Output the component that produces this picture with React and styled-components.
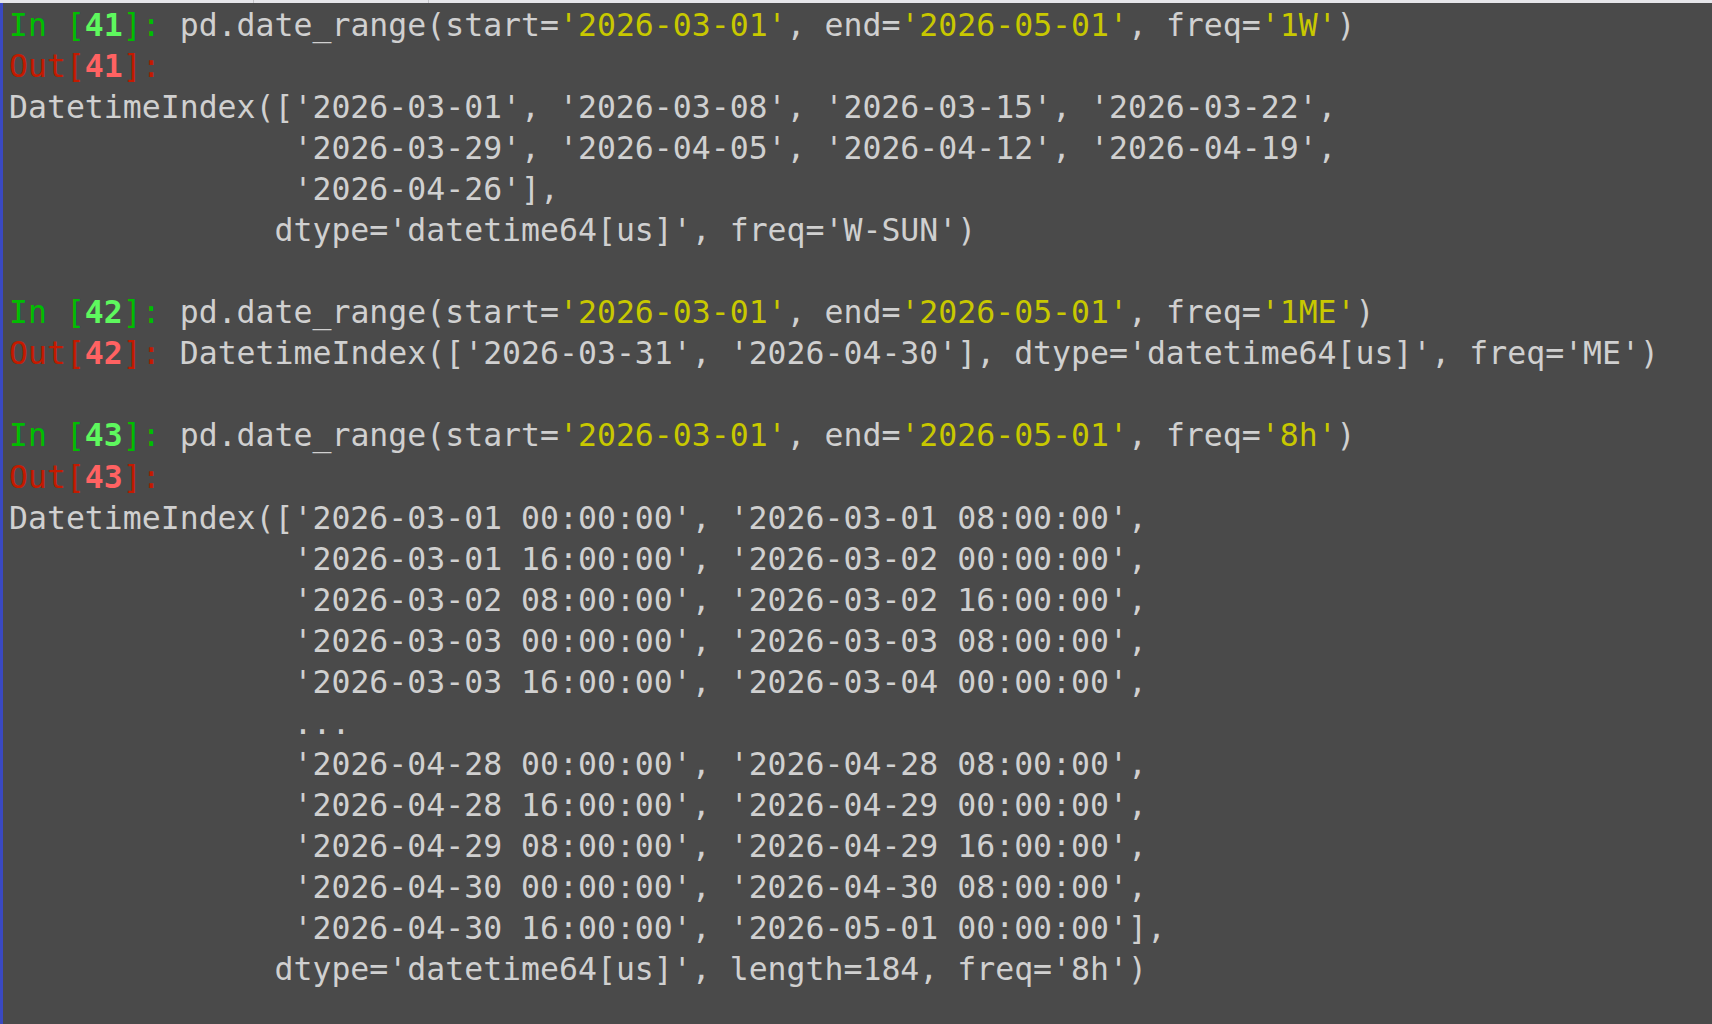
import React from "react";
import styled, { createGlobalStyle } from "styled-components";

const Global = createGlobalStyle`
  html, body { margin: 0; padding: 0; background: #4a4a4a; }
  #root { min-height: 100vh; }
`;

const Window = styled.div`
  width: 1712px;
  height: 1024px;
  display: flex;
  flex-direction: column;
  background: #4a4a4a;
  overflow: hidden;
`;

const TabStrip = styled.div`
  height: 3px;
  flex: none;
  display: flex;
  background: #e6e6ea;
`;

const TabEdge = styled.div`
  width: ${(p) => p.$w}px;
  flex: none;
  border-right: 1px solid #c4c4c8;
`;

const Body = styled.div`
  flex: 1;
  display: flex;
  border-left: 3px solid #3a49c2;
`;

const Console = styled.pre`
  margin: 0;
  padding: 2px 0 0 6px;
  font-family: "DejaVu Sans Mono", "Liberation Mono", monospace;
  font-size: 31.5px;
  line-height: 41px;
  color: #d0d0d0;
  white-space: pre;
`;

const Line = styled.div`
  height: 41.05px;
`;

const Prompt = styled.span`
  color: ${(p) => (p.$out ? "#c41a00" : "#00bd00")};
`;

const Num = styled.span`
  font-weight: bold;
  color: ${(p) => (p.$out ? "#ff6262" : "#5ef85e")};
`;

const Str = styled.span`
  color: #c8c800;
`;

const In = ({ n }) => (
  <>
    <Prompt>In [</Prompt>
    <Num>{n}</Num>
    <Prompt>]: </Prompt>
  </>
);

const Out = ({ n }) => (
  <>
    <Prompt $out>Out[</Prompt>
    <Num $out>{n}</Num>
    <Prompt $out>]: </Prompt>
  </>
);

const Call = ({ freq }) => (
  <>
    pd.date_range(start=<Str>'2026-03-01'</Str>, end=<Str>'2026-05-01'</Str>, freq=<Str>'{freq}'</Str>)
  </>
);

const PAD = "               ";

const hourly = [
  "'2026-03-01 16:00:00', '2026-03-02 00:00:00',",
  "'2026-03-02 08:00:00', '2026-03-02 16:00:00',",
  "'2026-03-03 00:00:00', '2026-03-03 08:00:00',",
  "'2026-03-03 16:00:00', '2026-03-04 00:00:00',",
  "...",
  "'2026-04-28 00:00:00', '2026-04-28 08:00:00',",
  "'2026-04-28 16:00:00', '2026-04-29 00:00:00',",
  "'2026-04-29 08:00:00', '2026-04-29 16:00:00',",
  "'2026-04-30 00:00:00', '2026-04-30 08:00:00',",
  "'2026-04-30 16:00:00', '2026-05-01 00:00:00'],",
];

export default function App() {
  return (
    <>
      <Global />
      <Window>
        <TabStrip>
          <TabEdge $w={253} />
          <TabEdge $w={174} />
        </TabStrip>
        <Body>
          <Console>
            <Line><In n="41" /><Call freq="1W" /></Line>
            <Line><Out n="41" /></Line>
            <Line>DatetimeIndex(['2026-03-01', '2026-03-08', '2026-03-15', '2026-03-22',</Line>
            <Line>{PAD}'2026-03-29', '2026-04-05', '2026-04-12', '2026-04-19',</Line>
            <Line>{PAD}'2026-04-26'],</Line>
            <Line>{"              "}dtype='datetime64[us]', freq='W-SUN')</Line>
            <Line />
            <Line><In n="42" /><Call freq="1ME" /></Line>
            <Line><Out n="42" />DatetimeIndex(['2026-03-31', '2026-04-30'], dtype='datetime64[us]', freq='ME')</Line>
            <Line />
            <Line><In n="43" /><Call freq="8h" /></Line>
            <Line><Out n="43" /></Line>
            <Line>DatetimeIndex(['2026-03-01 00:00:00', '2026-03-01 08:00:00',</Line>
            {hourly.map((t, i) => (
              <Line key={i}>{PAD}{t}</Line>
            ))}
            <Line>{"              "}dtype='datetime64[us]', length=184, freq='8h')</Line>
          </Console>
        </Body>
      </Window>
    </>
  );
}
